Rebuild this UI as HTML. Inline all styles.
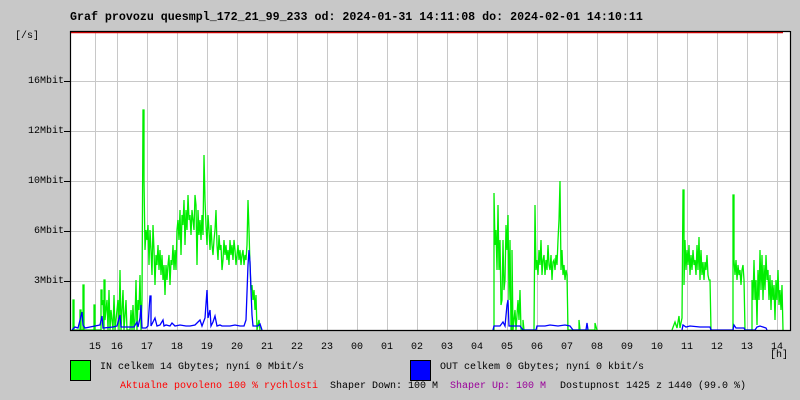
<!DOCTYPE html>
<html><head><meta charset="utf-8"><style>
html,body{margin:0;padding:0;background:#c8c8c8;width:800px;height:400px;overflow:hidden;position:relative;font-family:"Liberation Mono",monospace}
.t{position:absolute;white-space:pre;font-size:10px;line-height:12px;color:#000}
</style></head><body>
<div class="t" style="left:70px;top:12px;font-size:11.65px;font-weight:bold">Graf provozu quesmpl_172_21_99_233 od: 2024-01-31 14:11:08 do: 2024-02-01 14:10:11</div>
<div class="t" style="left:15px;top:31px">[/s]</div>
<svg width="800" height="400" style="position:absolute;left:0;top:0">
<rect x="70" y="31" width="720" height="299" fill="#fff"/>
<g stroke="#c8c8c8" stroke-width="1" shape-rendering="crispEdges">
<path d="M70 81.5H790M70 131.5H790M70 181.5H790M70 231.5H790M70 281.5H790"/>
<path d="M95.5 31V330M117.5 31V330M147.5 31V330M177.5 31V330M207.5 31V330M237.5 31V330M267.5 31V330M297.5 31V330M327.5 31V330M357.5 31V330M387.5 31V330M417.5 31V330M447.5 31V330M477.5 31V330M507.5 31V330M537.5 31V330M567.5 31V330M597.5 31V330M627.5 31V330M657.5 31V330M687.5 31V330M717.5 31V330M747.5 31V330M777.5 31V330"/>
<path stroke="#000" d="M64 81.5H70M64 131.5H70M64 181.5H70M64 231.5H70M64 281.5H70"/>
</g>
<g fill="none" stroke="#00ee00" stroke-width="1.3">
<polyline points="73,330 73,300 74,300 74,330 80,330 80,310 81,310 81,330 83,330 83,285 84,285 84,330 94,330 94,305 95,305 95,330 101,330 101,290 102,290 102,305 103,300 104,330 104,280 105,280 105,320 107,300 108,330 109,290 110,330 111,310 113,330 114,295 115,330 118,300 119,330 120,270 121,330 123,290 124,330 126,300 127,330 130,330 131,310 132,330 133,305 134,330 135,320 136,280 137,330 138,300 139,310 140,275 141,330 142,300 143,110 144,110 144,180 145,250 146,230 147,240 148,225 149,265 150,230 151,250 152,275 153,225 154,250 155,285 156,255 157,265 158,245 159,270 160,250 161,275 162,255 163,280 164,265 165,295 166,265 167,280 168,265 169,255 170,285 171,260 172,265 173,245 174,270 175,250 176,270 177,230 178,220 179,240 180,210 181,255 182,215 183,225 184,200 185,245 186,210 187,230 188,195 189,220 190,215 191,235 192,210 193,220 194,230 195,195 196,205 197,265 198,210 199,235 200,220 201,240 202,215 203,235 204,155 205,200 206,225 207,245 208,215 209,230 210,250 211,225 212,245 213,255 214,240 215,230 216,210 217,245 218,260 219,235 220,250 221,245 222,270 223,260 224,240 225,255 226,245 227,260 228,250 229,265 230,240 231,255 232,245 233,260 234,240 235,250 236,265 237,255 238,245 239,260 240,250 241,265 242,255 243,250 244,265 245,255 246,260 247,245 248,200 249,230 250,265 251,290 252,285 253,300 254,290 255,310 256,295 257,330 259,320 260,330"/>
<polyline points="494,330 494,193 495,245 496,230 497,270 498,205 499,270 500,240 501,305 502,300 503,240 504,290 505,280 506,225 507,250 508,215 509,300 510,240 511,330 512,330 512,250 513,330 515,310 516,330 518,300 519,320 520,290 521,330 523,330 523,320 524,330 534,330 535,205 536,270 537,260 538,275 539,250 540,265 541,240 542,275 543,260 544,255 545,275 546,260 547,270 548,245 549,265 550,270 551,255 552,280 553,262 554,260 555,270 556,255 557,265 558,240 559,220 560,181 561,270 562,250 563,275 564,265 565,280 566,270 567,275 568,330 579,330 579,320 580,330 595,330 595,323 597,330"/>
<polyline points="672,330 675,322 677,328 679,316 680,328 682,318 683,190 684,190 684,285 685,240 686,270 687,250 688,265 689,245 690,275 691,255 692,270 693,250 694,265 695,260 696,275 697,245 698,270 699,237 700,280 701,250 702,275 703,262 704,280 705,262 706,270 707,255 708,275 709,280 710,280 711,330 712,330"/>
<polyline points="733,330 733,195 734,195 734,260 735,275 736,260 737,280 738,265 739,275 740,270 741,285 742,270 743,265 744,280 745,330 746,330 752,330 752,280 753,300 754,260 755,300 756,280 757,325 758,270 759,300 760,250 761,290 762,255 763,300 764,265 765,290 766,255 767,280 768,270 769,300 770,275 771,310 772,280 773,300 774,285 775,320 776,280 777,300 778,270 779,305 780,290 781,310 782,285 783,330"/>
</g>
<g fill="none" stroke="#0000ff" stroke-width="1.3">
<polyline points="72,330 75,327 78,328 82,312 83,325 85,328 95,326 100,325 102,316 103,328 113,327 117,326 120,315 121,327 134,327 137,322 138,327 140,318 141,305 142,328 146,328 148,326 150,296 151,296 151,326 153,322 155,318 157,326 160,325 163,320 164,326 166,325 170,326 172,323 175,326 180,325 186,326 190,326 195,325 200,320 202,326 205,318 207,290 208,318 210,310 211,326 213,322 215,316 217,326 220,325 222,326 230,326 235,325 240,326 244,326 246,320 248,265 249,250 250,262 251,290 252,315 253,326 258,326 260,324 262,330"/>
<polyline points="493,330 494,326 500,326 503,322 505,326 507,305 508,300 509,326 512,326 520,326 523,330 536,330 537,326 545,326 550,325 558,326 565,325 570,326 573,330 586,330 587,323 588,330"/>
<polyline points="682,330 683,325 686,327 690,326 700,327 710,327 711,330 733,330 734,325 736,328 744,328 745,330 755,330 757,327 760,326 763,327 766,328 767,330"/>
</g>
<path d="M70 32.5H783" stroke="#e00000" stroke-width="1.6"/>
<path d="M70.5 31V330.5H790.5V31M70 31.5H790" stroke="#000" stroke-width="1.2" fill="none"/>
<rect x="70.5" y="360.5" width="20" height="20" fill="#00ff00" stroke="#000"/>
<rect x="410.5" y="360.5" width="20" height="20" fill="#0000ff" stroke="#000"/>
</svg>
<div class="t" style="left:28px;top:76px">16Mbit</div>
<div class="t" style="left:28px;top:126px">12Mbit</div>
<div class="t" style="left:28px;top:176px">10Mbit</div>
<div class="t" style="left:34px;top:226px">6Mbit</div>
<div class="t" style="left:34px;top:276px">3Mbit</div>
<div class="t" style="left:89px;top:342px">15</div>
<div class="t" style="left:111px;top:342px">16</div>
<div class="t" style="left:141px;top:342px">17</div>
<div class="t" style="left:171px;top:342px">18</div>
<div class="t" style="left:201px;top:342px">19</div>
<div class="t" style="left:231px;top:342px">20</div>
<div class="t" style="left:261px;top:342px">21</div>
<div class="t" style="left:291px;top:342px">22</div>
<div class="t" style="left:321px;top:342px">23</div>
<div class="t" style="left:351px;top:342px">00</div>
<div class="t" style="left:381px;top:342px">01</div>
<div class="t" style="left:411px;top:342px">02</div>
<div class="t" style="left:441px;top:342px">03</div>
<div class="t" style="left:471px;top:342px">04</div>
<div class="t" style="left:501px;top:342px">05</div>
<div class="t" style="left:531px;top:342px">06</div>
<div class="t" style="left:561px;top:342px">07</div>
<div class="t" style="left:591px;top:342px">08</div>
<div class="t" style="left:621px;top:342px">09</div>
<div class="t" style="left:651px;top:342px">10</div>
<div class="t" style="left:681px;top:342px">11</div>
<div class="t" style="left:711px;top:342px">12</div>
<div class="t" style="left:741px;top:342px">13</div>
<div class="t" style="left:771px;top:342px">14</div>
<div class="t" style="left:770px;top:350px">[h]</div>
<div class="t" style="left:100px;top:362px">IN celkem 14 Gbytes; nyní 0 Mbit/s</div>
<div class="t" style="left:440px;top:362px">OUT celkem 0 Gbytes; nyní 0 kbit/s</div>
<div class="t" style="left:120px;top:381px;color:#ff0000">Aktualne povoleno 100 % rychlosti</div>
<div class="t" style="left:330px;top:381px">Shaper Down: 100 M</div>
<div class="t" style="left:450px;top:381px;color:#990099">Shaper Up: 100 M</div>
<div class="t" style="left:560px;top:381px">Dostupnost 1425 z 1440 (99.0 %)</div>
</body></html>
